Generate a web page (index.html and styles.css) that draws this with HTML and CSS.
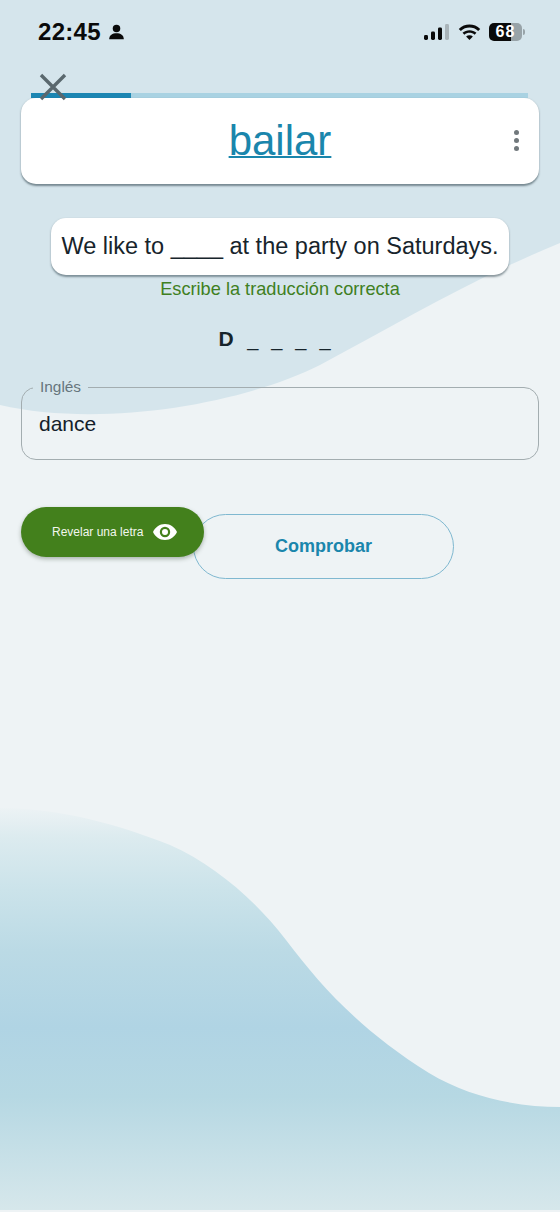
FILE: index.html
```html
<!DOCTYPE html>
<html lang="es">
<head>
<meta charset="utf-8">
<title>Revelar una letra</title>
<link rel="stylesheet" href="styles.css">
</head>
<body>
<div class="screen">
  <svg class="backdrop" viewBox="0 0 560 1212" preserveAspectRatio="none" aria-hidden="true">
    <defs>
      <linearGradient id="sea" x1="0" y1="805" x2="0" y2="1210" gradientUnits="userSpaceOnUse">
        <stop offset="0" stop-color="#eef3f5"/>
        <stop offset="0.08" stop-color="#dcebef"/>
        <stop offset="0.21" stop-color="#cbe3ea"/>
        <stop offset="0.36" stop-color="#bbdae5"/>
        <stop offset="0.55" stop-color="#b0d4e4"/>
        <stop offset="0.72" stop-color="#b6d8e3"/>
        <stop offset="1" stop-color="#d6e7eb"/>
      </linearGradient>
    </defs>
    <path class="sky" d="M0 0H560V243C470 280 400 322 320 365C240 405 100 428 0 405Z"/>
    <path d="M0 808C60 808 120 825 170 845C215 865 255 900 286 940C320 985 360 1030 429 1073C470 1098 520 1107 560 1107V1210H0Z" fill="url(#sea)"/>
  </svg>

  <header class="status">
    <div class="clock">
      <span class="time">22:45</span>
      <svg class="person" viewBox="0 0 16 16" aria-hidden="true"><circle cx="8" cy="4.2" r="4"/><path d="M0.2 15.8C0.2 11 3.8 9.2 8 9.2S15.8 11 15.8 15.8Z"/></svg>
    </div>
    <div class="indicators">
      <svg class="signal" viewBox="0 0 26 16" aria-hidden="true">
        <rect x="0" y="11" width="4" height="5" rx="1.4"/>
        <rect x="7" y="7.5" width="4" height="8.5" rx="1.4"/>
        <rect x="14" y="3.5" width="4" height="12.5" rx="1.4"/>
        <rect class="dim" x="21" y="0" width="4" height="16" rx="1.4"/>
      </svg>
      <svg class="wifi" viewBox="0 0 24 17" aria-hidden="true">
        <path d="M12 17L8.4 13.2C10.4 11.4 13.6 11.4 15.6 13.2Z"/>
        <path d="M6.6 11.4L4.6 9.3C8.6 5.6 15.4 5.6 19.4 9.3L17.4 11.4C14.4 8.6 9.6 8.6 6.6 11.4Z"/>
        <path d="M2.8 7.4L0.6 5.2C6.8-0.9 17.2-0.9 23.4 5.2L21.2 7.4C16.2 2.5 7.8 2.5 2.8 7.4Z"/>
      </svg>
      <div class="battery"><span class="level">68</span><span class="nub"></span></div>
    </div>
  </header>

  <section class="top">
    <svg class="close" viewBox="0 0 28 28" aria-hidden="true"><path d="M2 2L26 26M26 2L2 26"/></svg>
    <div class="progress"><div class="progress-fill"></div></div>
    <div class="word-card">
      <a class="word" href="#">bailar</a>
      <span class="menu"><i></i><i></i><i></i></span>
    </div>
  </section>

  <main class="exercise">
    <p class="sentence">We like to ____ at the party on Saturdays.</p>
    <p class="hint">Escribe la traducción correcta</p>
    <p class="letters"><b>D</b> <span>_ _ _ _</span></p>
    <fieldset class="field">
      <legend>Inglés</legend>
      <span class="answer">dance</span>
    </fieldset>
    <div class="actions">
      <button class="reveal" type="button">
        <span>Revelar una letra</span>
        <svg class="eye" viewBox="0 0 24 16" aria-hidden="true"><path fill-rule="evenodd" d="M12 0C6.5 0 2.2 3.3 0 8C2.2 12.7 6.5 16 12 16S21.8 12.7 24 8C21.8 3.3 17.5 0 12 0ZM12 13.2A5.2 5.2 0 1 1 12 2.8A5.2 5.2 0 0 1 12 13.2ZM12 11A3 3 0 1 0 12 5A3 3 0 0 0 12 11Z"/></svg>
      </button>
      <button class="check" type="button">Comprobar</button>
    </div>
  </main>
</div>
</body>
</html>
```
FILE: styles.css
```css
* { box-sizing: border-box; }
html, body { margin: 0; padding: 0; }
body { font-family: "Liberation Sans", Arial, sans-serif; color: #17242b; background: #eef3f5; }
.screen { position: relative; width: 560px; height: 1212px; overflow: hidden; background: #eef3f5; }
.backdrop { position: absolute; inset: 0; width: 100%; height: 100%; }
.sky { fill: #d5e5ec; }

.status { position: relative; display: flex; justify-content: space-between; align-items: center; height: 64px; padding: 0 38px; }
.clock { display: flex; align-items: center; gap: 8px; color: #0a0a0a; }
.time { font-size: 24px; font-weight: 700; letter-spacing: 0.3px; }
.person { width: 15px; height: 16px; fill: #0a0a0a; }
.indicators { display: flex; align-items: center; gap: 8px; }
.signal { width: 26px; height: 16px; fill: #0a0a0a; }
.signal .dim { fill: #a9b4b9; }
.wifi { width: 23px; height: 16px; fill: #0a0a0a; }
.battery { position: relative; display: flex; align-items: center; width: 33px; height: 18px; border-radius: 5px; background: linear-gradient(90deg, #0a0a0a 68%, #98a3a8 68%); }
.level { width: 100%; text-align: center; font-size: 16px; font-weight: 700; color: #fff; letter-spacing: 1px; }
.nub { position: absolute; right: -3px; top: 6px; width: 2px; height: 6px; border-radius: 0 2px 2px 0; background: #98a3a8; }

.top { position: relative; padding: 29px 21px 0; }
.close { position: absolute; left: 39px; top: 9px; width: 28px; height: 28px; z-index: 2; }
.close path { fill: none; stroke: #5a686e; stroke-width: 3.4; }
.progress { height: 5px; margin: 0 11px 0 10px; background: #a9d2e2; }
.progress-fill { width: 20.2%; height: 100%; background: #1c86b2; }
.word-card { display: flex; justify-content: center; align-items: center; position: relative; height: 86px; border-radius: 15px; background: #fff; box-shadow: 0 1.5px 2px rgba(40, 60, 70, 0.55); }
.word { font-size: 42px; line-height: 1; color: #1a86ac; text-decoration: underline; text-decoration-thickness: 2px; }
.menu { position: absolute; right: 20px; top: 32px; display: flex; flex-direction: column; gap: 3px; }
.menu i { width: 5px; height: 5px; border-radius: 50%; background: #71787c; }

.exercise { position: relative; display: flex; flex-direction: column; align-items: center; padding: 34px 21px 0; }
.exercise p { margin: 0; }
.sentence { width: 458px; height: 57px; border-radius: 15px; background: #fff; box-shadow: 0 1.5px 2px rgba(40, 60, 70, 0.5); font-size: 23.5px; line-height: 56px; text-align: center; white-space: nowrap; }
.exercise .hint { margin-top: 2px; font-size: 18.2px; line-height: 24px; color: #3f7f22; }
.exercise .letters { margin-top: 26px; padding-right: 11px; font-size: 20px; line-height: 24px; white-space: nowrap; }
.letters b { font-weight: 700; font-size: 21px; margin-right: 8px; }
.letters span { word-spacing: 7.4px; font-size: 20px; letter-spacing: 0; }
.field { width: 518px; height: 82px; margin: 27px 0 0; padding: 0 17px; border: 1px solid #a3adb0; border-radius: 15px; }
.field legend { padding: 0 7px 0 7px; margin-left: -6px; font-size: 15.4px; line-height: 18px; color: #66757c; }
.answer { display: block; margin-top: 15px; font-size: 21px; line-height: 26px; color: #14202a; }
.actions { display: flex; align-items: flex-start; align-self: flex-start; margin-top: 47px; }
.reveal { position: relative; z-index: 1; display: flex; align-items: center; gap: 10px; width: 183px; height: 50px; padding: 0 0 0 31px; border: 0; border-radius: 25px; background: #43801c; color: #f2f7ee; font-family: inherit; font-size: 12px; box-shadow: 0 2px 4px rgba(40, 60, 40, 0.35); }
.eye { width: 24px; height: 16px; fill: #fff; }
.check { width: 261px; height: 65px; margin: 7px 0 0 -11px; border: 1.5px solid #7fb8d0; border-radius: 33px; background: transparent; color: #1a86ac; font-family: inherit; font-size: 18px; font-weight: 700; padding: 0; }
```
